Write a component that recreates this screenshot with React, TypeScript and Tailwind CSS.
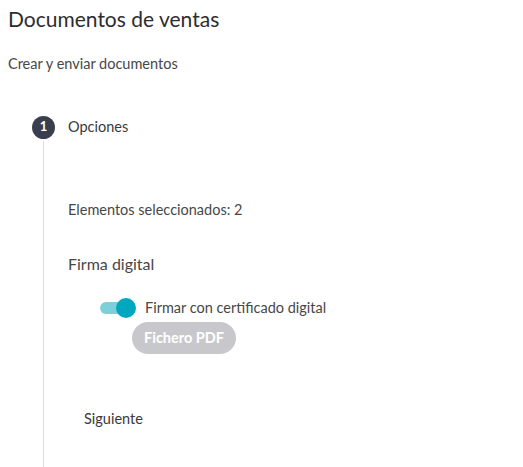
export default function App() {
  return (
    <div
      className="w-[523px] h-[467px] bg-white text-[#333] overflow-hidden"
      style={{ fontFamily: "Lato, 'Noto Sans', sans-serif" }}
    >
      <div className="pl-[8px] pt-[5px]">
        <h1 className="text-[21px] leading-[28px] text-[#2d2d2d]">Documentos de ventas</h1>
        <p className="mt-[22px] text-[14.5px] leading-[18px] text-[#474747]">Crear y enviar documentos</p>
      </div>

      {/* Step */}
      <div className="mt-[42px] pl-[32px]">
        <div className="flex items-center gap-[13px] h-[24px]">
          <div className="w-[23px] h-[23px] rounded-full bg-[#3a3f4f] text-white text-[13px] font-bold flex items-center justify-center">
            1
          </div>
          <span className="text-[14.5px] text-[#3a3a3a]">Opciones</span>
        </div>

        <div className="ml-[11px] border-l border-[#dcdcdc] h-[340px] mt-[2px] pl-[24px]">
          <p className="pt-[60px] text-[14.5px] leading-[18px] text-[#474747]">Elementos seleccionados: 2</p>
          <p className="mt-[35px] text-[16px] leading-[20px] text-[#474747]">Firma digital</p>

          <div className="ml-[32px] mt-[23px] flex items-center gap-[9px]">
            <div className="relative w-[36px] h-[20px] flex items-center">
              <div className="w-[34px] h-[12px] rounded-full bg-[#7dd0da]" />
              <div className="absolute right-0 top-0 w-[20px] h-[20px] rounded-full bg-[#00a7bf]" />
            </div>
            <span className="text-[14.5px] text-[#474747]">Firmar con certificado digital</span>
          </div>

          <button className="ml-[64px] mt-[3px] h-[32px] px-[12px] rounded-full bg-[#c8c8cc] text-white text-[14.5px] font-bold">
            Fichero PDF
          </button>

          <p className="mt-[56px] ml-[16px] text-[14.5px] leading-[18px] text-[#3a3a3a]">Siguiente</p>
        </div>
      </div>
    </div>
  );
}
